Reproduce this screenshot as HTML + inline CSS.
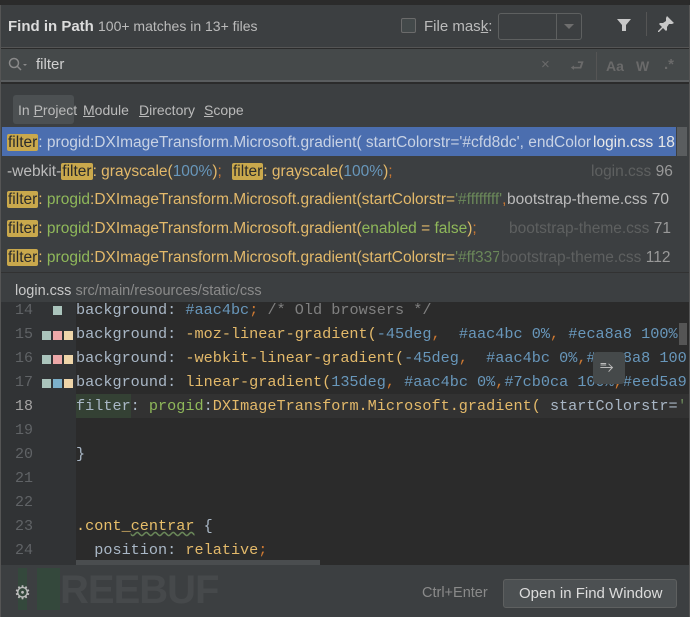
<!DOCTYPE html>
<html><head><meta charset="utf-8"><style>
*{margin:0;padding:0;box-sizing:border-box}
body{width:690px;height:617px;overflow:hidden;background:#2b2b2b;font-family:"Liberation Sans",sans-serif;position:relative;color:#bbbbbb}
.abs{position:absolute}
.t{white-space:nowrap;position:absolute}
.r{font-size:15.5px}
.hl{background:#c9a84c;color:#2b2b2b;border-radius:2px;padding:0 1px}
.g{color:#8fb85a}.y{color:#e3b96a}.b{color:#6897bb}.w{color:#a9b7c6}.o{color:#cc7832}.gr{color:#6a8759}
.mono{font-family:"Liberation Mono",monospace;font-size:15.2px;white-space:pre;position:absolute}
.ln{font-family:"Liberation Mono",monospace;font-size:15px;color:#606366;position:absolute;left:15px}
.sq{position:absolute;width:9px;height:9px}
</style></head><body>
<div class="abs" style="left:0;top:0;width:690px;height:5px;background:#2b2b2b"></div>
<div class="abs" style="left:1px;top:5px;width:688px;height:43px;background:#3c3f41;border-bottom:1px solid #555"></div>
<div class="t" style="left:8px;top:18px;font-size:15px;color:#dcdcdc;font-weight:bold">Find in Path <span style="font-weight:normal;font-size:14px;color:#bbb">100+ matches in 13+ files</span></div>
<div class="abs" style="left:401px;top:18px;width:15px;height:15px;border:1px solid #6b6b6b;border-radius:2px;background:#43494a"></div>
<div class="t" style="left:424px;top:18px;font-size:15px;color:#bbb">File mas<u>k</u>:</div>
<div class="abs" style="left:498px;top:13px;width:84px;height:27px;border:1px solid #5e6060;border-radius:3px"></div>
<div class="abs" style="left:556px;top:13px;width:1px;height:27px;background:#5e6060"></div>
<div class="abs" style="left:564px;top:24px;width:0;height:0;border-left:5px solid transparent;border-right:5px solid transparent;border-top:5px solid #6e6e6e"></div>
<svg class="abs" style="left:616px;top:17px" width="16" height="16"><path d="M1 2h14l-5 6v6h-4v-6z" fill="#c8c8c8"/></svg>
<div class="abs" style="left:646px;top:12px;width:1px;height:24px;background:#555"></div>
<svg class="abs" style="left:657px;top:15px" width="18" height="18"><path d="M10 1l7 7-2 1-3 0-2 3v3l-1 1-3-3-4 4-1 0 0-1 4-4-3-3 1-1h3l3-2 0-3z" fill="#c8c8c8"/></svg>
<div class="abs" style="left:1px;top:49px;width:688px;height:33px;background:#45494a;border-bottom:2px solid #5a5d5f"></div>
<svg class="abs" style="left:8px;top:57px" width="20" height="16"><circle cx="6" cy="6" r="4.5" stroke="#8a8a8a" stroke-width="1.5" fill="none"/><path d="M9 9l4 4" stroke="#8a8a8a" stroke-width="1.5"/><path d="M15 7l2 2 2-2z" fill="#8a8a8a"/></svg>
<div class="t" style="left:36px;top:56px;font-size:15px;color:#d0d0d0">filter</div>
<div class="t" style="left:541px;top:56px;font-size:15px;color:#6a6a6a">×</div>
<div class="t" style="left:570px;top:55px;font-size:16px;color:#6a6a6a">⮐</div>
<div class="abs" style="left:596px;top:52px;width:1px;height:28px;background:#555"></div>
<div class="t" style="left:606px;top:58px;font-size:14px;color:#6a6a6a;font-weight:bold">Aa</div>
<div class="t" style="left:636px;top:58px;font-size:14px;color:#6a6a6a;font-weight:bold">W</div>
<div class="t" style="left:664px;top:56px;font-size:15px;color:#6a6a6a;font-weight:bold">.*</div>
<div class="abs" style="left:1px;top:84px;width:688px;height:43px;background:#3c3f41"></div>
<div class="abs" style="left:13px;top:95px;width:61px;height:29px;background:#4c5052;border-radius:3px"></div>
<div class="t" style="left:18px;top:102px;font-size:14px;color:#bbb">In <u>P</u>roject</div>
<div class="t" style="left:83px;top:102px;font-size:14px;color:#bbb"><u>M</u>odule</div>
<div class="t" style="left:139px;top:102px;font-size:14px;color:#bbb"><u>D</u>irectory</div>
<div class="t" style="left:204px;top:102px;font-size:14px;color:#bbb"><u>S</u>cope</div>
<div class="abs" style="left:1px;top:127px;width:688px;height:145px;background:#3c3f41"></div>
<div class="abs" style="left:2px;top:127px;width:674px;height:29px;background:#4b6eaf"></div>
<div class="abs" style="left:677px;top:127px;width:10px;height:29px;background:#5a5d5f"></div>
<div class="t r" style="left:7px;top:134px;color:#c8d2e4"><span class="hl">filter</span>: progid:DXImageTransform.Microsoft.gradient( startColorstr='#cfd8dc', endColor:</div>
<div class="t r" style="left:591px;top:134px;color:#e8e8e8;background:#4b6eaf;padding-left:2px">login.css 18</div>
<div class="t r" style="left:7px;top:163px;color:#bbb">-webkit-<span class="hl">filter</span><span class="y">: grayscale(</span><span class="b">100%</span><span class="y">)</span><span class="o">;</span></div>
<div class="t r" style="left:232px;top:163px"><span class="hl">filter</span><span class="y">: grayscale(</span><span class="b">100%</span><span class="y">)</span><span class="o">;</span></div>
<div class="t r" style="left:591px;top:163px;color:#5e6060">login.css <span style="color:#999">96</span></div>
<div class="t r" style="left:7px;top:191px"><span class="hl">filter</span><span class="y">: </span><span class="g">progid</span><span class="y">:DXImageTransform.Microsoft.gradient(startColorstr=</span><span class="gr">'#ffffffff'</span><span class="o">,</span></div>
<div class="t r" style="left:505px;top:191px;color:#bbb;background:#3c3f41;padding-left:2px">bootstrap-theme.css 70</div>
<div class="t r" style="left:7px;top:220px"><span class="hl">filter</span><span class="y">: </span><span class="g">progid</span><span class="y">:DXImageTransform.Microsoft.gradient(</span><span class="g">enabled</span><span class="y"> = </span><span class="g">false</span><span class="y">)</span><span class="o">;</span></div>
<div class="t r" style="left:509px;top:220px;color:#5e6060">bootstrap-theme.css <span style="color:#999">71</span></div>
<div class="t r" style="left:7px;top:249px"><span class="hl">filter</span><span class="y">: </span><span class="g">progid</span><span class="y">:DXImageTransform.Microsoft.gradient(startColorstr=</span><span class="gr">'#ff337</span></div>
<div class="t r" style="left:499px;top:249px;color:#5e6060;background:#3c3f41;padding-left:2px">bootstrap-theme.css <span style="color:#999">112</span></div>
<div class="abs" style="left:1px;top:272px;width:688px;height:30px;background:#3c3f41;border-top:1px solid #323232"></div>
<div class="t" style="left:15px;top:283px;font-size:14.5px;color:#c8c8c8">login.css <span style="color:#8a8a8a">src/main/resources/static/css</span></div>
<div class="abs" style="left:1px;top:302px;width:75px;height:263px;background:#313335"></div>
<div class="abs" style="left:76px;top:394px;width:614px;height:24px;background:#323232"></div>
<div class="abs" style="left:76px;top:394px;width:55px;height:24px;background:#344134"></div>
<div class="ln" style="top:302px">14</div><div class="ln" style="top:326px">15</div><div class="ln" style="top:350px">16</div><div class="ln" style="top:374px">17</div><div class="ln" style="top:398px;color:#a4a3a3">18</div><div class="ln" style="top:422px">19</div><div class="ln" style="top:446px">20</div><div class="ln" style="top:470px">21</div><div class="ln" style="top:494px">22</div><div class="ln" style="top:518px">23</div><div class="ln" style="top:542px">24</div>
<div class="sq" style="left:53px;top:306px;background:#aac4bc"></div>
<div class="sq" style="left:42px;top:331px;background:#aac4bc"></div><div class="sq" style="left:53px;top:331px;background:#eca8a8"></div><div class="sq" style="left:64px;top:331px;background:#eed5a9"></div>
<div class="sq" style="left:42px;top:355px;background:#aac4bc"></div><div class="sq" style="left:53px;top:355px;background:#eca8a8"></div><div class="sq" style="left:64px;top:355px;background:#eed5a9"></div>
<div class="sq" style="left:42px;top:379px;background:#aac4bc"></div><div class="sq" style="left:53px;top:379px;background:#7cb0ca"></div><div class="sq" style="left:64px;top:379px;background:#eed5a9"></div>
<div class="mono w" style="left:76px;top:301px">background: <span class="b">#aac4bc</span><span class="o">;</span> <span style="color:#808080">/* Old browsers */</span></div>
<div class="mono w" style="left:76px;top:325px">background: <span class="y">-moz-linear-gradient(</span><span class="b">-45deg</span><span class="o">,</span>  <span class="b">#aac4bc 0%</span><span class="o">,</span> <span class="b">#eca8a8 100%</span><span class="o">,</span></div>
<div class="mono w" style="left:76px;top:349px">background: <span class="y">-webkit-linear-gradient(</span><span class="b">-45deg</span><span class="o">,</span>  <span class="b">#aac4bc 0%</span><span class="o">,</span><span class="b">#eca8a8 100</span></div>
<div class="mono w" style="left:76px;top:373px">background: <span class="y">linear-gradient(</span><span class="b">135deg</span><span class="o">,</span> <span class="b">#aac4bc 0%</span><span class="o">,</span><span class="b">#7cb0ca 100%</span><span class="o">,</span><span class="b">#eed5a9</span></div>
<div class="mono w" style="left:76px;top:397px">filter: <span class="g">progid</span>:<span class="y">DXImageTransform.Microsoft.gradient(</span> startColorstr=<span class="gr">'</span></div>
<div class="mono w" style="left:76px;top:445px">}</div>
<div class="mono" style="left:76px;top:517px;color:#e8bf6a">.cont_<span style="text-decoration:underline wavy #6a8759">centrar</span> <span class="w">{</span></div>
<div class="mono w" style="left:76px;top:541px">  position: <span class="y">relative</span><span class="o">;</span></div>
<div class="abs" style="left:76px;top:560px;width:244px;height:5px;background:#4a4d4f"></div>
<div class="abs" style="left:593px;top:352px;width:32px;height:32px;background:#45494a;border-radius:4px"></div>
<div class="t" style="left:600px;top:357px;font-size:17px;color:#bbb">⥱</div>
<div class="abs" style="left:679px;top:323px;width:8px;height:22px;background:#555"></div>
<div class="abs" style="left:1px;top:565px;width:688px;height:52px;background:#3c3f41"></div>
<div class="abs" style="left:18px;top:568px;width:9px;height:42px;background:#34483c"></div>
<div class="abs" style="left:37px;top:568px;width:23px;height:42px;background:#34483c"></div>
<div class="t" style="left:60px;top:568px;font-size:40px;font-weight:bold;color:#46494b;letter-spacing:-1px">REEBUF</div>
<div class="t" style="left:14px;top:582px;font-size:19px;color:#bbb">⚙</div>
<div class="t" style="left:422px;top:585px;font-size:14.5px;color:#8a8a8a">Ctrl+Enter</div>
<div class="abs" style="left:503px;top:579px;width:174px;height:29px;background:#4c5052;border:1px solid #5e6060;border-radius:3px"></div>
<div class="t" style="left:519px;top:585px;font-size:15px;color:#dcdcdc">Open in Find Window</div>
<div class="abs" style="left:0;top:5px;width:1px;height:612px;background:#555"></div>
<div class="abs" style="left:689px;top:5px;width:1px;height:612px;background:#555"></div>
</body></html>
